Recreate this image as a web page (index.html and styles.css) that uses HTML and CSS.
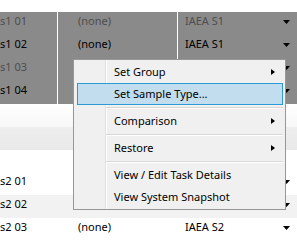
FILE: index.html
```html
<!DOCTYPE html>
<html>
<head>
<meta charset="utf-8">
<link rel="stylesheet" href="styles.css">
</head>
<body>
<div class="grid">
  <div class="top-gap"></div>
  <div class="row sel dim"><div class="c1">s1 01</div><div class="c2">(none)</div><div class="c3"><span>IAEA S1</span><svg class="dd" width="7" height="4" viewBox="0 0 7 4"><polygon points="0,0 7,0 3.5,4" /></svg></div></div>
  <div class="row sel"><div class="c1">s1 02</div><div class="c2">(none)</div><div class="c3"><span>IAEA S1</span><svg class="dd" width="7" height="4" viewBox="0 0 7 4"><polygon points="0,0 7,0 3.5,4" /></svg></div></div>
  <div class="row sel dim"><div class="c1">s1 03</div><div class="c2">(none)</div><div class="c3"><span>IAEA S1</span><svg class="dd" width="7" height="4" viewBox="0 0 7 4"><polygon points="0,0 7,0 3.5,4" /></svg></div></div>
  <div class="row sel"><div class="c1">s1 04</div><div class="c2">(none)</div><div class="c3"><span>IAEA S1</span><svg class="dd" width="7" height="4" viewBox="0 0 7 4"><polygon points="0,0 7,0 3.5,4" /></svg></div></div>
  <div class="group-header"></div>
  <div class="blank"></div>
  <div class="row"><div class="c1">s2 01</div><div class="c2">(none)</div><div class="c3"><span>IAEA S2</span><svg class="dd" width="7" height="4" viewBox="0 0 7 4"><polygon points="0,0 7,0 3.5,4" /></svg></div></div>
  <div class="row alt"><div class="c1">s2 02</div><div class="c2">(none)</div><div class="c3"><span>IAEA S2</span><svg class="dd" width="7" height="4" viewBox="0 0 7 4"><polygon points="0,0 7,0 3.5,4" /></svg></div></div>
  <div class="row"><div class="c1">s2 03</div><div class="c2">(none)</div><div class="c3"><span>IAEA S2</span><svg class="dd" width="7" height="4" viewBox="0 0 7 4"><polygon points="0,0 7,0 3.5,4" /></svg></div></div>
</div>

<div class="menu">
  <div class="item"><span>Set Group</span><i class="sub"></i></div>
  <div class="item active"><span>Set Sample Type...</span></div>
  <div class="sep"></div>
  <div class="item"><span>Comparison</span><i class="sub"></i></div>
  <div class="sep"></div>
  <div class="item"><span>Restore</span><i class="sub"></i></div>
  <div class="sep"></div>
  <div class="item"><span>View / Edit Task Details</span></div>
  <div class="item"><span>View System Snapshot</span></div>
</div>
</body>
</html>
```
FILE: styles.css
```css
html, body {
  margin: 0;
  padding: 0;
  background: #ffffff;
}
body {
  width: 297px;
  height: 240px;
  overflow: hidden;
  position: relative;
  font-family: "Noto Sans", "Open Sans", sans-serif;
  font-size: 11px;
  color: #000;
}
.grid {
  display: flex;
  flex-direction: column;
}
.top-gap {
  height: 12px;
}
.row {
  height: 23px;
  display: flex;
  line-height: 16px;
  white-space: nowrap;
}
.row > div {
  box-sizing: border-box;
  overflow: hidden;
  padding-top: 1px;
}
.c1 {
  width: 58px;
  border-right: 1px solid transparent;
}
.c2 {
  width: 120px;
  padding-left: 20px;
  border-right: 1px solid transparent;
}
.c3 {
  flex: 1;
  padding-left: 7px;
  display: flex;
  align-items: flex-start;
}
.c3 span {
  flex: 1;
}
.dd {
  margin-top: 7px;
  margin-right: 7px;
  fill: #000;
}
.row.sel {
  background: #8a8a8a;
}
.row.sel .c1, .row.sel .c2 {
  border-right-color: #ffffff;
}
.row.dim {
  color: #4e4e4e;
}
.row.alt {
  background: #f2f2f2;
}
.group-header {
  height: 46px;
  background: linear-gradient(#ffffff 0%, #f7f7f7 50%, #eeeeee 50%, #e9e9e9 100%);
}
.blank {
  height: 22px;
}

.menu {
  position: absolute;
  left: 73px;
  top: 59px;
  width: 213px;
  box-sizing: border-box;
  border: 1px solid #979797;
  background: #f0f0f0;
  padding: 1px 2px 1px 3px;
}
.menu::before {
  content: "";
  position: absolute;
  left: 31px;
  top: 0;
  bottom: 0;
  width: 1px;
  background: #e2e2e2;
  border-right: 1px solid #ffffff;
}
.item {
  position: relative;
  height: 22px;
  line-height: 22px;
  box-sizing: border-box;
  padding-left: 36px;
  padding-right: 7px;
  display: flex;
  align-items: center;
  border: 1px solid transparent;
  white-space: nowrap;
}
.item span {
  flex: 1;
}
.item.active {
  background: #c2ddee;
  border-color: #2b9ad6;
  z-index: 1;
}
.sub {
  width: 0;
  height: 0;
  border-left: 4px solid #000;
  border-top: 3.5px solid transparent;
  border-bottom: 3.5px solid transparent;
}
.sep {
  height: 5px;
  position: relative;
  margin-left: 29px;
}
.sep::after {
  content: "";
  position: absolute;
  left: 0;
  right: 0;
  top: 2px;
  height: 1px;
  background: #d7d7d7;
  border-bottom: 1px solid #ffffff;
}
```
